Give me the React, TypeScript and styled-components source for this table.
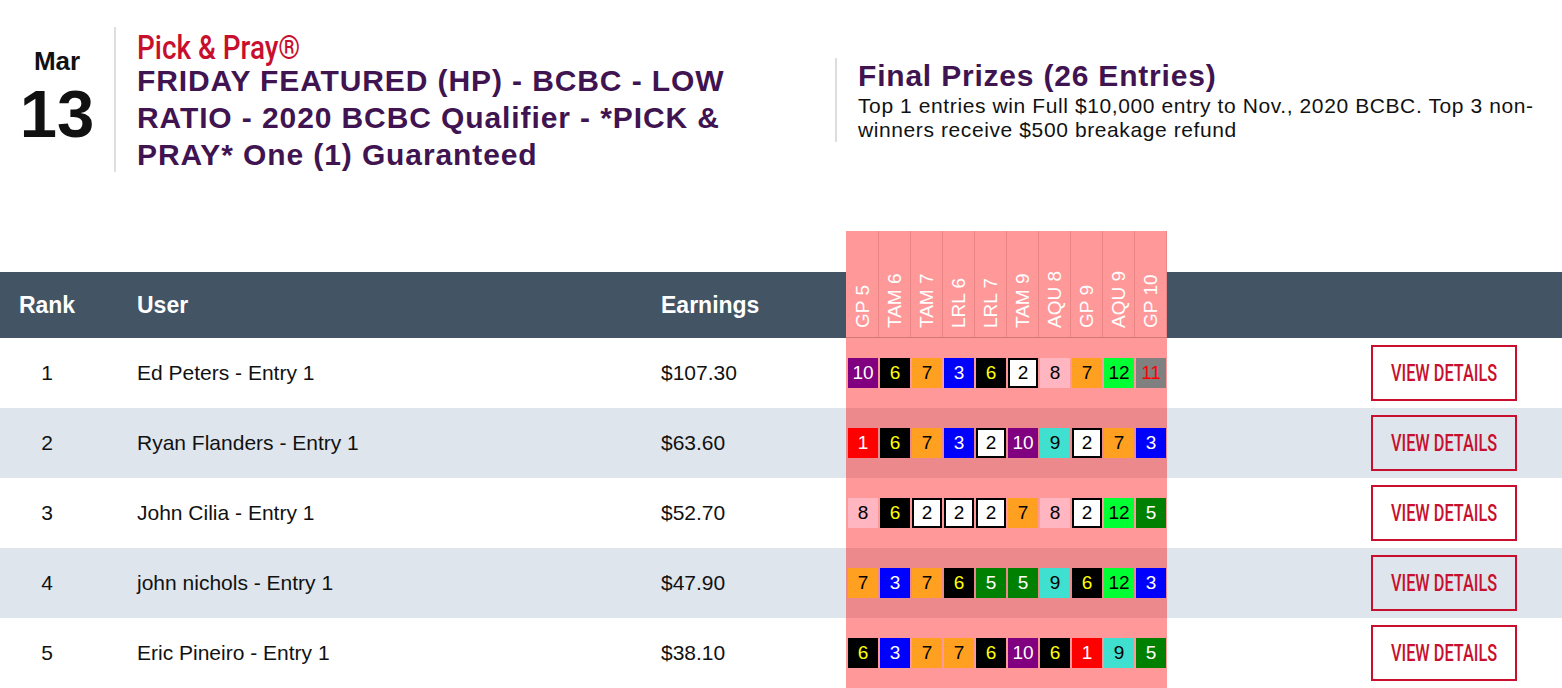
import React from 'react';
import styled, { createGlobalStyle } from 'styled-components';

const GlobalStyle = createGlobalStyle`
  html, body {
    margin: 0;
    padding: 0;
    background: #fff;
  }
  body {
    font-family: "Liberation Sans", Arial, Helvetica, sans-serif;
    color: #111;
  }
`;

const COLS = '94px 567px 185px 321px 1fr';

const Page = styled.div`
  width: 1562px;
  height: 688px;
  overflow: hidden;
`;

const Top = styled.header`
  display: flex;
  align-items: center;
  margin-top: 27px;
  height: 145px;
  margin-bottom: 59px;
`;

const DateBox = styled.div`
  align-self: stretch;
  width: 114px;
  border-right: 2px solid #dedede;
  display: flex;
  flex-direction: column;
  align-items: center;
  padding-top: 19px;
  box-sizing: content-box;
`;

const Month = styled.div`
  font-size: 26px;
  line-height: 30px;
  font-weight: 700;
  color: #111;
`;

const Day = styled.div`
  font-size: 67px;
  line-height: 60px;
  font-weight: 700;
  color: #111;
  margin-top: 8px;
`;

const TitleBox = styled.div`
  align-self: stretch;
  flex: 0 0 719px;
  box-sizing: border-box;
  padding: 6px 40px 0 21px;
`;

const Brand = styled.div`
  font-family: Roboto, "Liberation Sans", sans-serif;
  font-weight: 500;
  font-size: 34px;
  line-height: 29px;
  color: #c8102e;
  transform: scaleX(0.82);
  transform-origin: left center;
  white-space: nowrap;
`;

const Title = styled.h1`
  margin: 0;
  font-size: 30px;
  line-height: 37px;
  letter-spacing: 0.9px;
  font-weight: 700;
  color: #3f1450;
`;

const PrizeBox = styled.div`
  flex: 1;
  border-left: 2px solid #dedede;
  padding: 0 20px 0 21px;
  height: 84px;
`;

const PrizeTitle = styled.h2`
  margin: 0;
  font-size: 30px;
  line-height: 36px;
  letter-spacing: 0.8px;
  font-weight: 700;
  color: #3f1450;
`;

const PrizeText = styled.p`
  margin: 0;
  font-size: 21px;
  line-height: 24px;
  letter-spacing: 0.6px;
  color: #111;
`;

const HeaderRow = styled.div`
  display: grid;
  grid-template-columns: ${COLS};
  height: 107px;
  background: linear-gradient(to bottom, transparent 41px, #435464 41px);
`;

const HeadCell = styled.div<{ center?: boolean; pad?: number }>`
  align-self: end;
  height: 66px;
  display: flex;
  align-items: center;
  justify-content: ${(p) => (p.center ? 'center' : 'flex-start')};
  padding-left: ${(p) => p.pad || 0}px;
  font-size: 23px;
  font-weight: 700;
  color: #fff;
`;

const RaceHeads = styled.div`
  display: grid;
  grid-template-columns: repeat(10, 32px);
  padding-left: 1px;
  background: #ff9999;
  border-bottom: 1px solid rgba(120, 60, 60, 0.35);
  box-sizing: border-box;
`;

const RaceHead = styled.div`
  writing-mode: vertical-rl;
  transform: rotate(180deg);
  width: 32px;
  box-sizing: border-box;
  border-left: 1px solid rgba(210, 110, 110, 0.45);
  line-height: 32px;
  padding-top: 9px;
  font-size: 19px;
  color: #fff;
  white-space: nowrap;
`;

const Row = styled.div<{ alt?: boolean }>`
  display: grid;
  grid-template-columns: ${COLS};
  height: 70px;
  align-items: center;
  background: ${(p) => (p.alt ? '#dee5ec' : '#fff')};
  font-size: 21px;
  color: #111;
`;

const RankCell = styled.div`
  text-align: center;
`;

const UserCell = styled.div`
  padding-left: 43px;
`;

const PicksCell = styled.div`
  align-self: stretch;
  display: grid;
  grid-template-columns: repeat(10, 32px);
  align-items: center;
  justify-items: center;
  padding-left: 1px;
  background: rgba(255, 0, 0, 0.4);
`;

const Cloth = styled.div<{ bg: string; fg: string; boxed?: boolean }>`
  width: 30px;
  height: 30px;
  box-sizing: border-box;
  display: flex;
  align-items: center;
  justify-content: center;
  background: ${(p) => p.bg};
  color: ${(p) => p.fg};
  border: ${(p) => (p.boxed ? '2px solid #000' : 'none')};
  font-size: 19px;
`;

const ActionCell = styled.div`
  display: flex;
  justify-content: flex-end;
  padding-right: 45px;
`;

const DetailsButton = styled.button`
  width: 146px;
  height: 56px;
  box-sizing: border-box;
  border: 2px solid #c8102e;
  background: transparent;
  color: #c8102e;
  display: flex;
  align-items: center;
  justify-content: center;
  padding: 0;
  cursor: pointer;
`;

const ButtonLabel = styled.span`
  display: inline-block;
  font-family: Roboto, "Liberation Sans", sans-serif;
  font-weight: 500;
  font-size: 24px;
  white-space: nowrap;
  transform: scaleX(0.68);
`;

const CLOTHS: Record<number, { bg: string; fg: string; boxed?: boolean }> = {
  1: { bg: '#ff0000', fg: '#fff' },
  2: { bg: '#fff', fg: '#000', boxed: true },
  3: { bg: '#0000ff', fg: '#fff' },
  5: { bg: '#008000', fg: '#fff' },
  6: { bg: '#000', fg: '#ffff00' },
  7: { bg: '#ffa020', fg: '#000' },
  8: { bg: '#ffb6c1', fg: '#000' },
  9: { bg: '#40e0d0', fg: '#000' },
  10: { bg: '#800080', fg: '#fff' },
  11: { bg: '#808080', fg: '#ff0000' },
  12: { bg: '#00ff33', fg: '#000' },
};

const races = ['GP 5', 'TAM 6', 'TAM 7', 'LRL 6', 'LRL 7', 'TAM 9', 'AQU 8', 'GP 9', 'AQU 9', 'GP 10'];

const entries = [
  { rank: 1, user: 'Ed Peters - Entry 1', earnings: '$107.30', picks: [10, 6, 7, 3, 6, 2, 8, 7, 12, 11] },
  { rank: 2, user: 'Ryan Flanders - Entry 1', earnings: '$63.60', picks: [1, 6, 7, 3, 2, 10, 9, 2, 7, 3] },
  { rank: 3, user: 'John Cilia - Entry 1', earnings: '$52.70', picks: [8, 6, 2, 2, 2, 7, 8, 2, 12, 5] },
  { rank: 4, user: 'john nichols - Entry 1', earnings: '$47.90', picks: [7, 3, 7, 6, 5, 5, 9, 6, 12, 3] },
  { rank: 5, user: 'Eric Pineiro - Entry 1', earnings: '$38.10', picks: [6, 3, 7, 7, 6, 10, 6, 1, 9, 5] },
];

const App = () => {
  return (
    <Page>
      <GlobalStyle />
      <Top>
        <DateBox>
          <Month>Mar</Month>
          <Day>13</Day>
        </DateBox>
        <TitleBox>
          <Brand>Pick &amp; Pray®</Brand>
          <Title>FRIDAY FEATURED (HP) - BCBC - LOW RATIO - 2020 BCBC Qualifier - *PICK &amp; PRAY* One (1) Guaranteed</Title>
        </TitleBox>
        <PrizeBox>
          <PrizeTitle>Final Prizes (26 Entries)</PrizeTitle>
          <PrizeText>Top 1 entries win Full $10,000 entry to Nov., 2020 BCBC. Top 3 non-winners receive $500 breakage refund</PrizeText>
        </PrizeBox>
      </Top>

      <HeaderRow>
        <HeadCell center>Rank</HeadCell>
        <HeadCell pad={43}>User</HeadCell>
        <HeadCell>Earnings</HeadCell>
        <RaceHeads>
          {races.map((r) => (
            <RaceHead key={r}>{r}</RaceHead>
          ))}
        </RaceHeads>
        <HeadCell />
      </HeaderRow>

      {entries.map((e, i) => (
        <Row key={e.rank} alt={i % 2 === 1}>
          <RankCell>{e.rank}</RankCell>
          <UserCell>{e.user}</UserCell>
          <div>{e.earnings}</div>
          <PicksCell>
            {e.picks.map((n, j) => (
              <Cloth key={j} {...CLOTHS[n]}>
                {n}
              </Cloth>
            ))}
          </PicksCell>
          <ActionCell>
            <DetailsButton>
              <ButtonLabel>VIEW DETAILS</ButtonLabel>
            </DetailsButton>
          </ActionCell>
        </Row>
      ))}
    </Page>
  );
};

export default App;
